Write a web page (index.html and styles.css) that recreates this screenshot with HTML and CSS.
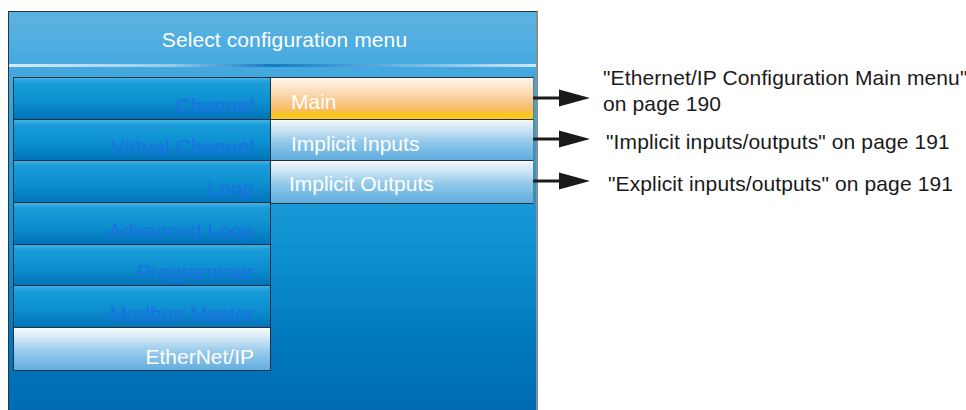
FILE: index.html
```html
<!DOCTYPE html>
<html lang="en">
<head>
  <meta charset="UTF-8" />
  <title>Select configuration menu</title>
  <link rel="stylesheet" href="styles.css">
</head>
<body>
  <div class="page">
    <div class="panel">
      <div class="panel-title">Select configuration menu</div>
      <div class="panel-rule"></div>

      <div class="menu">
        <ul class="menu-list">
          <li class="menu-item">Channel</li>
          <li class="menu-item">Virtual Channel</li>
          <li class="menu-item">Loop</li>
          <li class="menu-item">Advanced Loop</li>
          <li class="menu-item">Programmer</li>
          <li class="menu-item">Modbus Master</li>
          <li class="menu-item menu-item--active">EtherNet/IP</li>
        </ul>

        <ul class="sub-list">
          <li class="sub-item sub-item--selected">Main</li>
          <li class="sub-item">Implicit Inputs</li>
          <li class="sub-item sub-item--tight">Implicit Outputs</li>
        </ul>
      </div>
    </div>

    <!-- page references for each sub menu -->
    <div class="notes">
      <div class="note note--main">
        <svg class="arrow" width="57" height="18" viewBox="0 0 57 18">
          <line x1="0" y1="9" x2="28" y2="9" stroke="#1a1a1a" stroke-width="3"/>
          <polygon points="26,0.5 57,9 26,17.5" fill="#1a1a1a"/>
        </svg>
        <p>"Ethernet/IP Configuration Main menu"<br>on page 190</p>
      </div>
      <div class="note note--inputs">
        <svg class="arrow" width="57" height="18" viewBox="0 0 57 18">
          <line x1="0" y1="9" x2="28" y2="9" stroke="#1a1a1a" stroke-width="3"/>
          <polygon points="26,0.5 57,9 26,17.5" fill="#1a1a1a"/>
        </svg>
        <p>"Implicit inputs/outputs" on page 191</p>
      </div>
      <div class="note note--outputs">
        <svg class="arrow" width="57" height="18" viewBox="0 0 57 18">
          <line x1="0" y1="9" x2="28" y2="9" stroke="#1a1a1a" stroke-width="3"/>
          <polygon points="26,0.5 57,9 26,17.5" fill="#1a1a1a"/>
        </svg>
        <p>"Explicit inputs/outputs" on page 191</p>
      </div>
    </div>
  </div>
</body>
</html>
```

FILE: styles.css
```css
* {
  box-sizing: border-box;
  font-family: 'Liberation Sans', Arial, sans-serif;
}

body {
  margin: 0;
  background: #fff;
  overflow: hidden;
}

.page {
  display: flex;
  align-items: flex-start;
  height: 410px;
}

/* instrument screen */
.panel {
  flex-shrink: 0;
  margin: 11px 0 0 8px;
  width: 530px;
  height: 410px;
  border-top: 1px solid #2a3542;
  border-left: 1px solid #2a3542;
  border-right: 2px solid #8c8c8c;
  background: linear-gradient(to bottom, #5cb3e2 0px, #42a8de 60px, #1e9cd9 170px, #0e90d0 240px, #0078be 330px, #006bb2 400px);
  color: #fff;
}

.panel-title {
  height: 52px;
  padding: 4px 0 0 24px;
  display: flex;
  justify-content: center;
  align-items: center;
  font-size: 21px;
  letter-spacing: 0.1px;
  color: #fff;
}

.panel-rule {
  height: 3px;
  background: linear-gradient(to right, #d6ebf8 0%, #9ccbea 30%, #1479c2 50%, #6fb6e3 75%, #cfe6f6 100%);
}

.menu {
  display: flex;
  align-items: flex-start;
  padding: 10px 0 0 4px;
}

.menu-list,
.sub-list {
  list-style: none;
  margin: 0;
  padding: 0;
  border: 1px solid #25313d;
}

.menu-list {
  width: 258px;
}

.menu-item {
  height: 41.7px;
  padding: 0 16px 1px 0;
  display: flex;
  justify-content: flex-end;
  align-items: flex-end;
  line-height: 24px;
  font-size: 21px;
  color: #1f6ee6;
  border-bottom: 1px solid #25313d;
  background: linear-gradient(to bottom, #45b0e4 0%, #1a9cd9 12%, #0d90d0 55%, #0074ba 100%);
}

.menu-item:last-child {
  border-bottom: none;
}

.menu-item--active {
  color: #fff;
  background: linear-gradient(to bottom, #f6f9fc 0%, #d6e9f5 22%, #98cbeb 55%, #62addf 100%);
}

.sub-list {
  width: 264px;
  margin-left: -1px;
  border-right-color: #6e7c88;
}

.sub-item {
  height: 41.7px;
  padding: 7px 0 0 20px;
  display: flex;
  align-items: center;
  font-size: 21px;
  color: #fff;
  border-bottom: 1px solid #25313d;
  background: linear-gradient(to bottom, #f3f8fb 0%, #cbe4f3 25%, #92c8ea 55%, #5eaddf 100%);
}

.sub-item:last-child {
  border-bottom: none;
}

.sub-item--selected {
  padding-top: 8px;
  background: linear-gradient(to bottom, #fdf4e8 0%, #fbe0bd 30%, #f9c584 62%, #f9bb60 78%, #fcc81e 88%, #fcc81e 100%);
}

.sub-item--tight {
  padding: 4px 0 0 18px;
}

/* references on the right */
.notes {
  margin-left: -5px;
  display: flex;
  flex-direction: column;
}

.note {
  display: flex;
  align-items: flex-start;
}

.note p {
  margin: 0;
  font-size: 21px;
  line-height: 26px;
  letter-spacing: 0.12px;
  white-space: nowrap;
  color: #1a1a1a;
}

.arrow {
  flex-shrink: 0;
  margin-top: 1px;
}

.note--main {
  margin-top: 65px;
}

.note--main .arrow {
  margin-top: 24px;
}

.note--main p {
  margin-left: 13px;
}

.note--inputs {
  margin-top: 12px;
}

.note--inputs p {
  margin-left: 16px;
}

.note--outputs {
  margin-top: 16px;
}

.note--outputs p {
  margin-left: 18px;
}
```
